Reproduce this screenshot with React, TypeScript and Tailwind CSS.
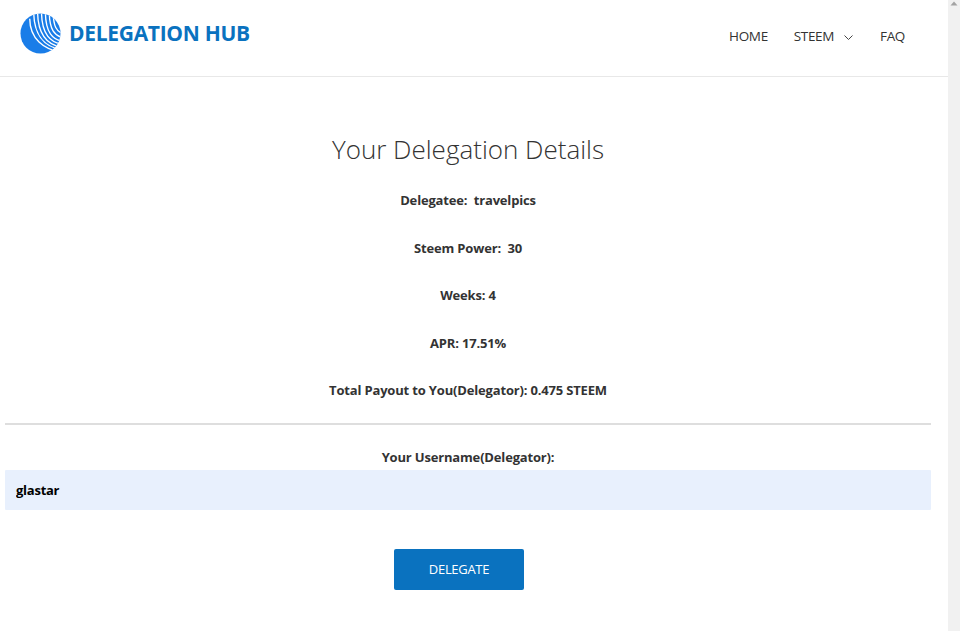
const details = [
  "Delegatee:\u00a0 travelpics",
  "Steem Power:\u00a0 30",
  "Weeks: 4",
  "APR: 17.51%",
  "Total Payout to You(Delegator): 0.475 STEEM",
];

function Logo() {
  const stripes = [
    "M10 6 C10 26 24 38 44 40.5",
    "M14 -2 C14 26 27 36 46 38",
    "M18 -2 C18 24 29 34 46 35.5",
    "M22 -2 C22 22 31 31 46 32.5",
    "M26 -2 C26 20 33 28 46 29.5",
    "M30 -2 C30 17 35 24 46 26",
    "M34 -2 C34 13 37 20 46 22",
    "M38 -2 C38 8 40 14 46 16",
  ];
  return (
    <svg width="41" height="41" viewBox="0 0 42 42" className="shrink-0">
      <defs>
        <clipPath id="globe">
          <circle cx="21" cy="21" r="20.5" />
        </clipPath>
      </defs>
      <circle cx="21" cy="21" r="20.5" fill="#1a7de8" />
      <g clipPath="url(#globe)" fill="none" stroke="#ffffff" strokeWidth="1.4">
        {stripes.map((d) => (
          <path key={d} d={d} />
        ))}
      </g>
    </svg>
  );
}

export default function App() {
  return (
    <div className="flex h-[631px] overflow-hidden bg-white font-['Open_Sans','Noto_Sans',sans-serif] text-[#333]">
      <div className="w-[948px] shrink-0">
        {/* Header */}
        <header className="flex h-[77px] items-center justify-between border-b border-[#e8e8e8] pl-5 pr-[43px]">
          <div className="mb-[9px] flex items-center gap-2">
            <Logo />
            <span className="text-[21px] leading-none font-bold tracking-[-0.3px] text-[#0a72bf]">DELEGATION HUB</span>
          </div>
          <nav className="mt-[-4px] flex items-center text-[13.5px] font-normal tracking-[-0.35px]">
            <a href="#home">HOME</a>
            <a href="#steem" className="ml-[26px] flex items-center">
              STEEM
              <svg width="9" height="5" viewBox="0 0 9 5" fill="none" stroke="#444" strokeWidth="1" className="ml-[10px] mt-[2px]">
                <path d="M0.5 0.5 L4.5 4.5 L8.5 0.5" />
              </svg>
            </a>
            <a href="#faq" className="ml-[27px]">FAQ</a>
          </nav>
        </header>

        {/* Details */}
        <main className="pl-[5px] pr-[17px] text-center">
          <h1 className="mt-[52px] text-[26px] leading-[40px] font-light">Your Delegation Details</h1>
          <div className="mt-[21px] flex flex-col gap-[27.5px] text-[13px] leading-5 font-bold tracking-[-0.17px]">
            {details.map((line) => (
              <p key={line}>{line}</p>
            ))}
          </div>
          <hr className="mt-[23px] border-t-2 border-[#dedede]" />
          <label className="mt-[22px] block text-[13px] leading-5 font-bold tracking-[-0.17px]">Your Username(Delegator):</label>
          <input
            readOnly
            value="glastar"
            className="mt-[3px] block h-[40px] w-full rounded-[1px] bg-[#e8f0fd] px-[11px] text-[13px] font-bold tracking-[-0.25px] text-black outline-none"
          />
          <button className="mt-[39px] ml-[389px] block h-[41px] w-[130px] rounded-[2px] bg-[#0a72bf] text-[13px] font-normal tracking-[-0.3px] text-white">
            DELEGATE
          </button>
        </main>
      </div>

      {/* Scrollbar */}
      <div className="relative w-3 shrink-0 bg-[#f1f1f1]">
        <svg width="8" height="5" viewBox="0 0 8 5" className="absolute top-[1px] left-[2px]">
          <path d="M4 0.5 L7.5 4.5 L0.5 4.5 Z" fill="#a3a3a3" />
        </svg>
      </div>
    </div>
  );
}
